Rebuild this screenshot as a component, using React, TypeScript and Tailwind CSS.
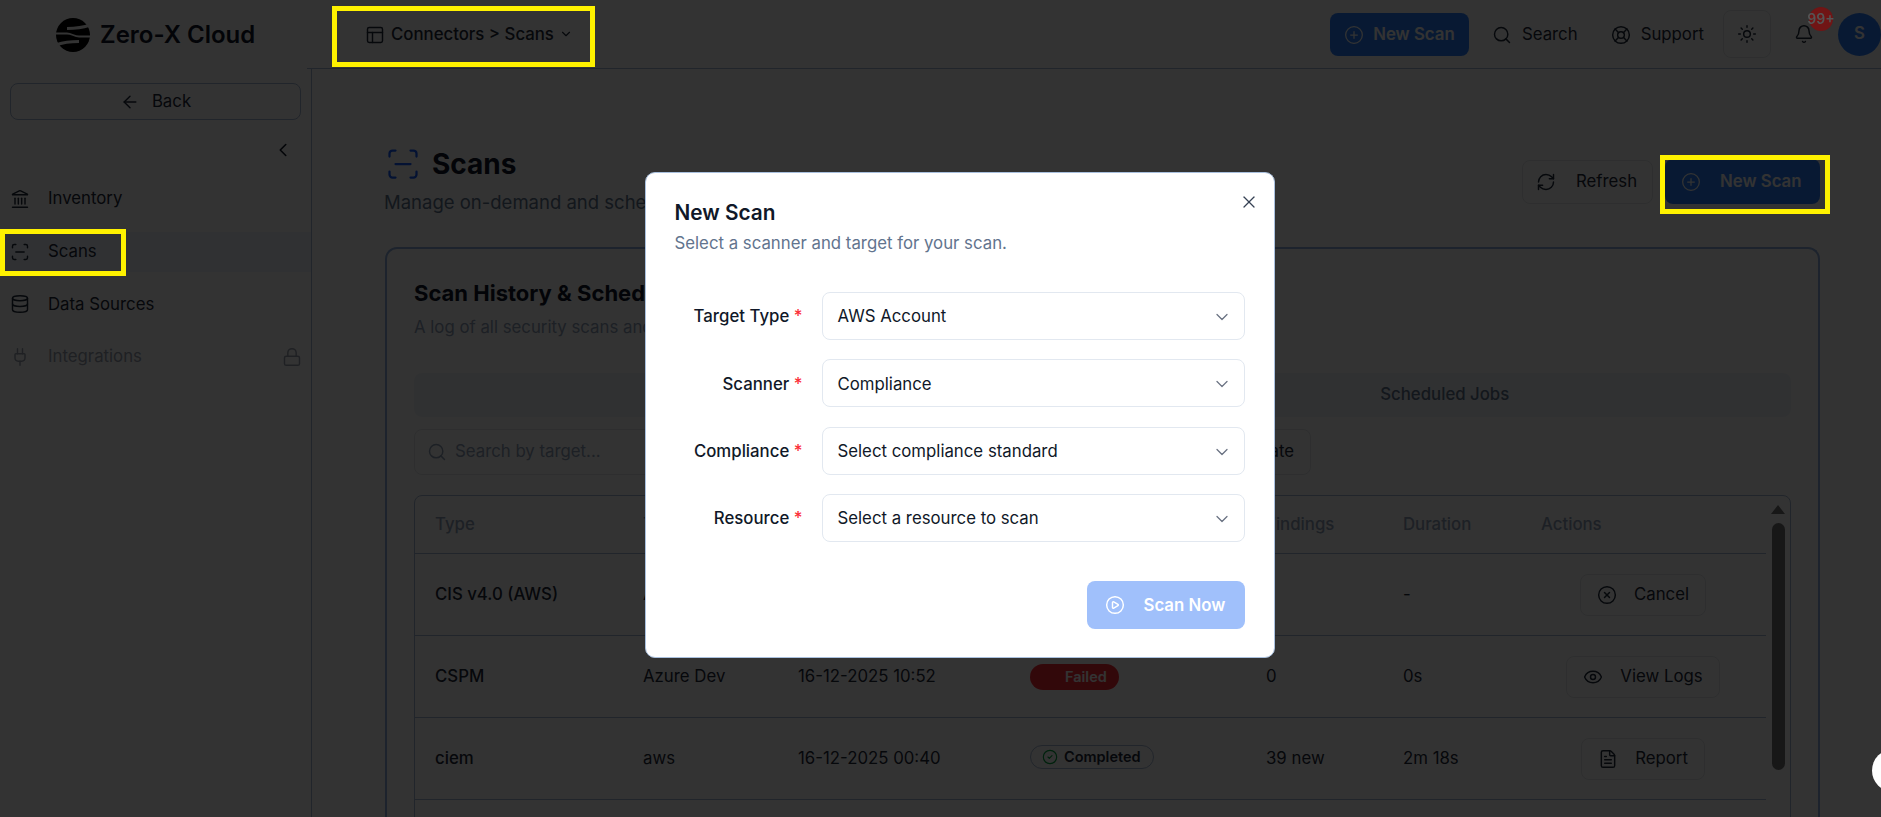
import React from 'react'
import {
  ArrowLeft,
  Bell,
  ChevronDown,
  ChevronLeft,
  CircleCheck,
  CirclePlay,
  CirclePlus,
  CircleX,
  Database,
  Eye,
  FileText,
  Landmark,
  LifeBuoy,
  Lock,
  PanelsTopLeft,
  Plug,
  RefreshCw,
  ScanLine,
  Search,
  Sun,
  X,
} from 'lucide-react'

function Logo() {
  return (
    <svg viewBox="0 0 34 34" className="h-[34px] w-[34px] shrink-0" fill="none">
      <circle cx="17" cy="17" r="17" fill="#000" />
      <path d="M36 6.500C28 9.500 20 10.500 11 10.500" stroke="#fff" strokeWidth="3" />
      <path d="M-2 27.500C6 24.500 14 23.500 23 23.500" stroke="#fff" strokeWidth="3" />
      <path d="M-2 15.500H11C16 15.500 18 18.500 23 18.500H36" stroke="#fff" strokeWidth="1.800" />
    </svg>
  )
}

function NavItem({
  icon: Icon,
  label,
  active,
  muted,
  locked,
}: {
  icon: React.ElementType
  label: string
  active?: boolean
  muted?: boolean
  locked?: boolean
}) {
  return (
    <div className={`flex h-[40px] items-center pl-[10px] pr-[9px] ${active ? 'bg-blue-50' : ''} ${muted ? 'text-gray-400' : 'text-gray-800'}`}>
      <Icon size={20} strokeWidth={1.75} className="shrink-0" />
      <span className="ml-[18px] flex-1 text-[16.8px]">{label}</span>
      {locked && <Lock size={20} strokeWidth={1.75} />}
    </div>
  )
}

function Sidebar() {
  return (
    <aside className="w-[312px] shrink-0 border-r border-[#a5b8d5]">
      <div className="px-[10px] pt-[14px]">
        <button className="flex h-[37px] w-full items-center justify-center gap-3 rounded-lg border border-[#a5b8d5] pt-[1px] text-[16.8px] text-gray-800">
          <ArrowLeft size={20} strokeWidth={1.75} />
          Back
        </button>
      </div>
      <div className="flex justify-end pr-[17px] pt-[19px]">
        <ChevronLeft size={22} strokeWidth={1.75} className="text-gray-900" />
      </div>
      <nav className="mt-[18px] flex flex-col gap-[12.700px]">
        <NavItem icon={Landmark} label="Inventory" />
        <NavItem icon={ScanLine} label="Scans" active />
        <NavItem icon={Database} label="Data Sources" />
        <NavItem icon={Plug} label="Integrations" muted locked />
      </nav>
    </aside>
  )
}

function Header() {
  return (
    <header className="flex h-[69px] shrink-0">
      <div className="flex w-[307px] shrink-0 items-center pl-[56px]">
        <Logo />
        <span className="ml-[10px] text-[24px] font-semibold text-gray-900">Zero-X Cloud</span>
      </div>
      <div className="flex flex-1 items-center justify-between border-b border-[#a5b8d5] pl-[58px]">
        <div className="flex items-center pt-[2px] text-gray-800">
          <PanelsTopLeft size={20} strokeWidth={1.75} />
          <span className="ml-[6px] text-[16.8px] font-medium">Connectors &gt; Scans</span>
          <ChevronDown size={14} className="ml-[5px] -translate-y-[1px]" />
        </div>
        <div className="flex h-full items-center text-gray-800">
          <button className="flex h-[43px] w-[139px] items-center justify-center gap-[9px] rounded-lg bg-blue-500 pt-[1px] text-[16.8px] font-semibold text-white">
            <CirclePlus size={20} strokeWidth={1.5} />
            New Scan
          </button>
          <div className="ml-[23px] flex items-center gap-[10px] pt-[2px] text-[16.8px]">
            <Search size={20} strokeWidth={1.75} />
            Search
          </div>
          <div className="ml-[33px] flex items-center gap-[10px] pt-[2px] text-[16.8px]">
            <LifeBuoy size={20} strokeWidth={1.75} />
            Support
          </div>
          <div className="ml-[19px] flex h-[48px] w-[48px] items-center justify-center rounded-lg border border-gray-200">
            <Sun size={20} strokeWidth={1.75} />
          </div>
          <div className="relative ml-[23px] mr-[24px] flex items-center">
            <Bell size={20} strokeWidth={1.75} />
            <span className="absolute -top-[17px] left-[15px] z-[15] flex h-[24px] w-[24px] items-center justify-center rounded-full bg-[#701515] text-sm font-semibold leading-none whitespace-nowrap text-[#555555]">99+</span>
          </div>
          <div className="flex h-[43px] w-[43px] shrink-0 items-center justify-center rounded-full bg-blue-500 text-[16.8px] font-semibold text-white">S</div>
        </div>
      </div>
    </header>
  )
}

function ActionButton({ icon: Icon, label }: { icon: React.ElementType; label: string }) {
  return (
    <button className="flex h-[42px] items-center gap-[17px] rounded-lg border border-gray-200 px-4 text-[16.8px] text-gray-800">
      <Icon size={20} strokeWidth={1.75} />
      {label}
    </button>
  )
}

function ScanRow({
  type,
  target,
  time,
  status,
  findings,
  duration,
  action,
}: {
  type: string
  target: string
  time: string
  status: React.ReactNode
  findings: string
  duration: string
  action: React.ReactNode
}) {
  return (
    <div className="mr-[24px] grid h-[82px] grid-cols-[208px_155px_232px_236px_137px_138px_1fr] items-center border-b border-[#a5b8d5] pl-5 text-[16.8px] text-gray-800">
      <span className="font-medium">{type}</span>
      <span>{target}</span>
      <span>{time}</span>
      <span>{status}</span>
      <span>{findings}</span>
      <span>{duration}</span>
      <span className="flex justify-center pr-[21px]">{action}</span>
    </div>
  )
}

function ScansTable() {
  return (
    <div className="relative mt-[20px] rounded-t-lg border border-[#a5b8d5]">
      <div className="mr-[24px] grid h-[58px] grid-cols-[208px_155px_232px_236px_137px_138px_1fr] items-center border-b border-[#a5b8d5] pl-5 text-[16.8px] font-medium text-slate-400">
        <span>Type</span>
        <span>Target</span>
        <span>Time</span>
        <span>Status</span>
        <span>Findings</span>
        <span>Duration</span>
        <span>Actions</span>
      </div>
      <ScanRow
        type="CIS v4.0 (AWS)"
        target="AWS Prod"
        time="16-12-2025 11:02"
        status={<span className="inline-flex h-[24px] items-center rounded-full bg-blue-500 px-3 text-sm font-semibold text-white">Running</span>}
        findings="-"
        duration="-"
        action={<ActionButton icon={CircleX} label="Cancel" />}
      />
      <ScanRow
        type="CSPM"
        target="Azure Dev"
        time="16-12-2025 10:52"
        status={
          <span className="inline-flex h-[26px] w-[89px] items-center rounded-full bg-red-500 pl-[35px] text-[14.500px] font-semibold text-white">Failed</span>
        }
        findings="0"
        duration="0s"
        action={<ActionButton icon={Eye} label="View Logs" />}
      />
      <ScanRow
        type="ciem"
        target="aws"
        time="16-12-2025 00:40"
        status={
          <span className="inline-flex h-[24px] items-center gap-[6px] rounded-full border border-[#a5b8d5] pl-[11px] pr-3 text-[14.500px] font-semibold text-gray-800">
            <CircleCheck size={16} strokeWidth={1.75} className="text-green-600" />
            Completed
          </span>
        }
        findings="39 new"
        duration="2m 18s"
        action={<ActionButton icon={FileText} label="Report" />}
      />
      <div className="h-[82px]" />
      <div className="absolute right-[5px] top-[9px] flex w-[14px] flex-col items-center">
        <span className="h-0 w-0 border-x-[7px] border-b-[9px] border-x-transparent border-b-neutral-500" />
        <span className="mt-[9px] h-[247px] w-[13px] rounded-full bg-neutral-500" />
      </div>
    </div>
  )
}

function MainContent() {
  return (
    <main className="min-w-0 flex-1 pl-[73px] pr-[61px] pt-[77px]">
      <div className="flex items-start justify-between">
        <div>
          <div className="flex items-center gap-[11px]">
            <ScanLine size={36} strokeWidth={1.5} className="text-blue-600" />
            <h1 className="text-[28px] leading-[36px] font-bold text-gray-900">Scans</h1>
          </div>
          <p className="-ml-[1px] mt-[6px] text-[18.5px] leading-[28px] text-slate-500">Manage on-demand and scheduled security scans</p>
        </div>
        <div className="mt-[13px] flex items-center gap-3">
          <button className="flex h-[44px] w-[131px] items-center gap-[20px] rounded-lg border border-gray-200 pl-[13px] text-[16.8px] text-gray-800">
            <RefreshCw size={20} strokeWidth={1.75} />
            Refresh
          </button>
          <button className="flex h-[45px] w-[155px] items-center gap-[19px] rounded-lg bg-blue-500 pl-[16px] text-[16.8px] font-semibold text-white">
            <CirclePlus size={20} strokeWidth={1.5} />
            New Scan
          </button>
        </div>
      </div>
      <section className="mt-[31px] rounded-t-xl border-2 border-b-0 border-[#8fb0de] px-[27px] pt-[28px]">
        <h2 className="text-[22px] leading-[32px] font-bold text-gray-900">Scan History &amp; Schedules</h2>
        <p className="mt-[6px] text-[16.8px] leading-[24px] text-slate-400">A log of all security scans and scheduled jobs.</p>
        <div className="mt-[34px] grid h-[44px] grid-cols-2 items-center rounded-lg bg-slate-100 text-center text-[16.8px] font-medium text-slate-500">
          <span className="-translate-x-[2px]">Scan History</span>
          <span className="-translate-x-[2px]">Scheduled Jobs</span>
        </div>
        <div className="mt-[12px] flex gap-3">
          <div className="flex h-[46px] w-[420px] items-center rounded-lg border border-gray-200 pl-[12px] text-[16.8px] text-slate-400">
            <Search size={20} strokeWidth={1.75} />
            <span className="ml-[8px]">Search by target...</span>
          </div>
          <button className="ml-auto mr-[480px] flex h-[46px] items-center rounded-lg border border-gray-200 px-4 text-[16.8px] text-gray-800">Date</button>
        </div>
        <ScansTable />
      </section>
    </main>
  )
}

function FormRow({ label, value }: { label: string; value: string }) {
  return (
    <div className="flex items-center">
      <label className="w-[128px] pt-[2px] text-right text-[16.8px] font-medium whitespace-nowrap text-gray-900">
        {label} <span className="text-red-500">*</span>
      </label>
      <div className="ml-[19px] flex h-[48px] flex-1 items-center justify-between rounded-lg border border-slate-200 pl-[15px] pr-[12px] pt-[2px] text-[16.8px] text-gray-900">
        {value}
        <ChevronDown size={20} strokeWidth={1.5} className="text-gray-500" />
      </div>
    </div>
  )
}

function NewScanDialog() {
  return (
    <div className="fixed inset-0 z-20 flex items-start justify-center pl-[38px] pt-[172px]">
      <div className="relative h-[486px] w-[630px] rounded-[10px] border border-[#a9c0de] bg-white px-[29px] pt-[24px]">
        <button className="absolute right-[15px] top-[19px] text-gray-700">
          <X size={20} strokeWidth={1.5} />
        </button>
        <h2 className="text-[20.8px] leading-[32px] font-semibold text-gray-900">New Scan</h2>
        <p className="mt-[2px] text-[16.8px] leading-[24px] text-slate-500">Select a scanner and target for your scan.</p>
        <div className="mt-[37px] flex flex-col gap-[19.300px]">
          <FormRow label="Target Type" value="AWS Account" />
          <FormRow label="Scanner" value="Compliance" />
          <FormRow label="Compliance" value="Select compliance standard" />
          <FormRow label="Resource" value="Select a resource to scan" />
        </div>
        <div className="mt-[39px] flex justify-end">
          <button className="flex h-[48px] w-[158px] items-center gap-[19px] rounded-lg bg-[#a0c0fb] pl-[18px] pt-[1px] text-[16.8px] font-semibold text-white">
            <CirclePlay size={20} strokeWidth={1.75} />
            Scan Now
          </button>
        </div>
      </div>
    </div>
  )
}

export default function App() {
  return (
    <div className="relative flex h-screen w-full flex-col overflow-hidden bg-white font-['Inter',sans-serif]">
      <Header />
      <div className="flex min-h-0 flex-1">
        <Sidebar />
        <MainContent />
      </div>
      <div className="fixed inset-0 z-10 bg-black/80" />
      <NewScanDialog />
      <div className="absolute right-[-34px] top-[749px] z-30 h-[43px] w-[43px] rounded-full bg-white" />
      <div className="absolute left-[332px] top-[6px] z-30 h-[61px] w-[263px] border-[5px] border-[#fff200]" />
      <div className="absolute left-0 top-[229px] z-30 h-[47px] w-[126px] border-[5px] border-[#fff200]" />
      <div className="absolute left-[1660px] top-[155px] z-30 h-[59px] w-[170px] border-[5px] border-[#fff200]" />
    </div>
  )
}
